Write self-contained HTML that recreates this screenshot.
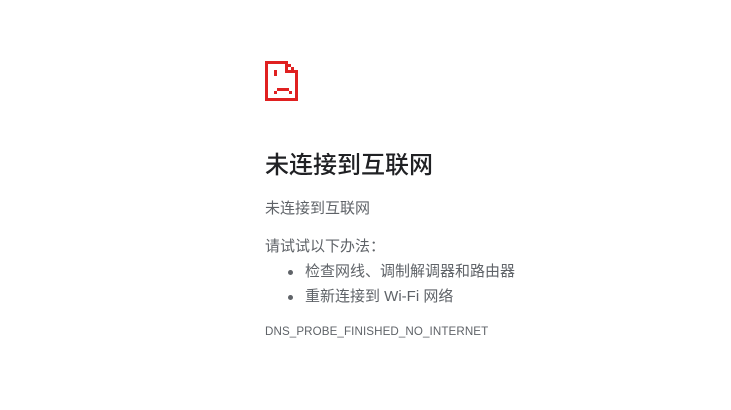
<!DOCTYPE html>
<html><head><meta charset="utf-8"><style>
body{margin:0;background:#fff;width:731px;height:410px;overflow:hidden;font-family:"Liberation Sans","Noto Sans CJK SC",sans-serif;color:#5f6368}
.a{position:absolute;white-space:nowrap}
h1{position:absolute;left:265px;top:150px;margin:0;font-size:24px;font-weight:500;color:#202124;line-height:32px}
.p{font-size:15px;line-height:20px}
.dot{position:absolute;width:5px;height:5px;border-radius:50%;background:#5f6368}
</style></head><body>
<svg class="a" style="left:265px;top:61px" width="36" height="40" viewBox="0 0 36 40" fill="#e02020">
<rect x="0" y="0" width="3" height="40"/>
<rect x="0" y="0" width="23" height="3"/>
<rect x="0" y="37" width="33" height="3"/>
<rect x="30" y="12" width="3" height="28"/>
<rect x="20" y="0" width="3" height="12"/>
<rect x="20" y="9" width="13" height="3"/>
<rect x="23" y="3" width="3" height="3"/>
<rect x="26" y="6" width="3" height="3"/>
<rect x="9" y="9" width="3" height="6"/>
<rect x="12" y="27" width="12" height="3"/>
<rect x="9" y="30" width="3" height="3"/>
<rect x="24" y="30" width="3" height="3"/>
</svg>
<h1>未连接到互联网</h1>
<div class="a p" style="left:265px;top:199px">未连接到互联网</div>
<div class="a p" style="left:265px;top:237px">请试试以下办法：</div>
<div class="dot" style="left:288px;top:270px"></div>
<div class="a p" style="left:305px;top:262px">检查网线、调制解调器和路由器</div>
<div class="dot" style="left:288px;top:295px"></div>
<div class="a p" style="left:305px;top:287px">重新连接到 Wi-Fi 网络</div>
<div class="a" style="left:265px;top:324px;font-size:11.6px;letter-spacing:0.1px;line-height:16px">DNS_PROBE_FINISHED_NO_INTERNET</div>
</body></html>
